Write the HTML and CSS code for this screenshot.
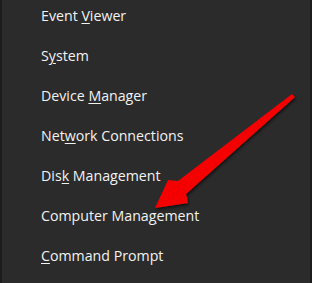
FILE: index.html
```html
<!DOCTYPE html>
<html>
<head>
<meta charset="utf-8">
<link rel="stylesheet" href="styles.css">
</head>
<body>
<div class="menu">
  <ul class="items">
    <li>Event <u>V</u>iewer</li>
    <li>S<u>y</u>stem</li>
    <li>Device <u>M</u>anager</li>
    <li>Net<u>w</u>ork Connections</li>
    <li>Dis<u>k</u> Management</li>
    <li>Computer Mana<u>g</u>ement</li>
    <li><u>C</u>ommand Prompt</li>
  </ul>
  <svg class="arrow" width="312" height="283" viewBox="0 0 312 283">
    <defs>
      <filter id="sh" x="-20%" y="-20%" width="140%" height="140%">
        <feDropShadow dx="1" dy="2" stdDeviation="1.5" flood-color="#000" flood-opacity="0.6"/>
      </filter>
    </defs>
    <polygon filter="url(#sh)" fill="#f40000" points="292,94 295,97 186,194 188,203 155,208 168,180 178,181"/>
  </svg>
</div>
</body>
</html>
```
FILE: styles.css
```css
html, body {
  margin: 0;
  padding: 0;
  background: #2b2b2b;
}
.menu {
  position: relative;
  width: 312px;
  height: 283px;
  box-sizing: border-box;
  background: #2b2b2b;
  border-left: 2px solid #1c1c1c;
  border-right: 2px solid #1c1c1c;
  overflow: hidden;
}
.items {
  list-style: none;
  margin: -4px 0 0 0;
  padding: 0 0 0 39px;
  display: flex;
  flex-direction: column;
}
.items li {
  height: 40px;
  line-height: 40px;
  font-family: "Open Sans", "Noto Sans", sans-serif;
  font-size: 14.2px;
  color: #f2f2f2;
  white-space: nowrap;
}
.items u {
  text-decoration-thickness: 1px;
  text-underline-offset: 2px;
}
.arrow {
  position: absolute;
  left: -2px;
  top: 0;
}
```
